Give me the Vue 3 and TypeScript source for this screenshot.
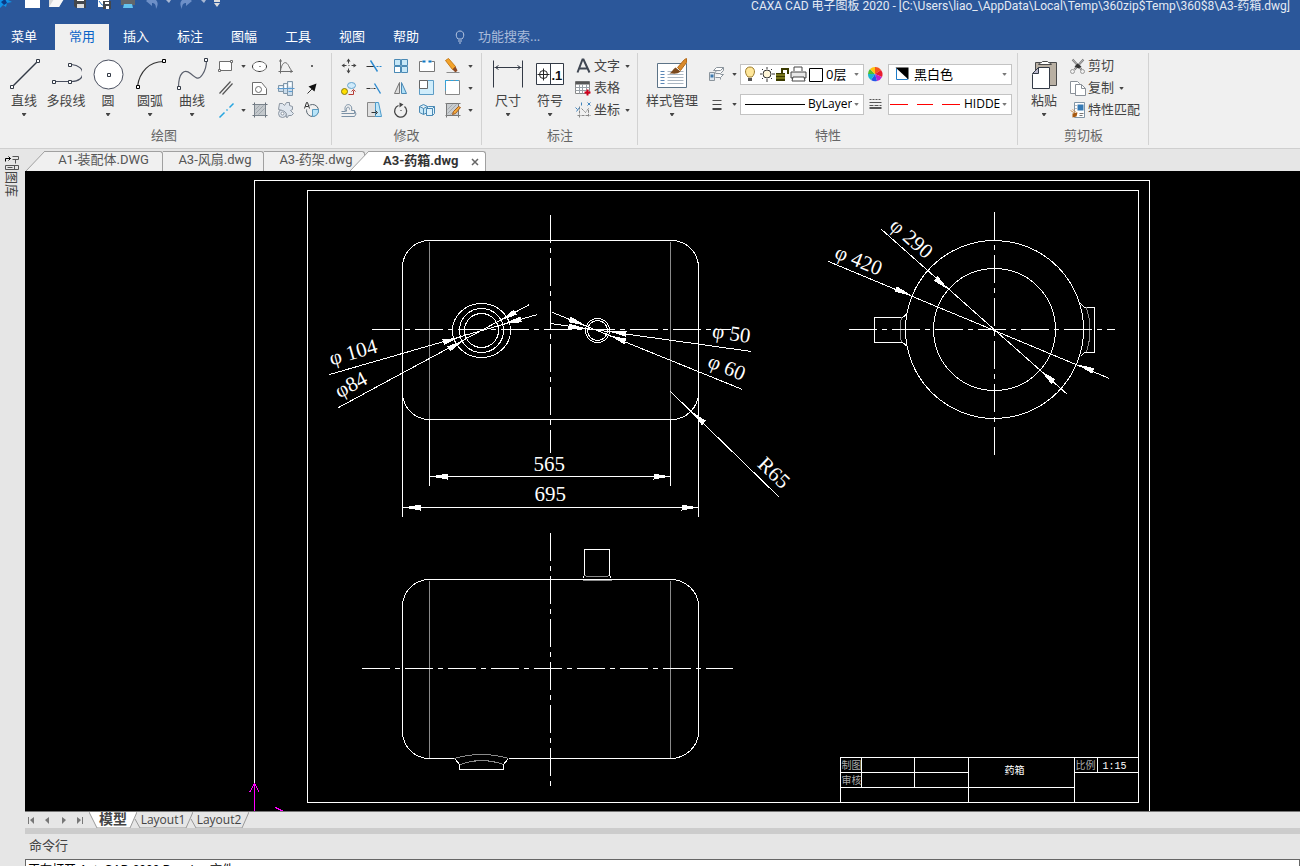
<script setup lang="ts">
import { ref } from 'vue'

interface Tool { name: string; icon: string; menu?: boolean }

const g = '#6d6d6d'
const big: Record<string, string> = {
  line: '<path d="M4 28 29 3" stroke="#333a46" stroke-width="1.4"/><path d="M2 27h3v3H2zM28 1h3v3h-3z" fill="#fff" stroke="#333a46"/>',
  poly: '<path d="M5 23h16M21 23c15 0 15-16 0-17" stroke="#4a5060" stroke-width="1.2"/><path d="M2 22h3v3H2zM18 22h3v3h-3zM18 5h3v3h-3z" fill="#fff" stroke="#333a46"/>',
  circle: '<circle cx="16" cy="16" r="14.5" fill="#fff" stroke="#4a5060"/><path d="M15 15h3v3h-3z" stroke="#333a46"/>',
  arc: '<path d="M3 28C5 13 15 3 29 3" stroke="#333" stroke-width="1.2"/><path d="M2 27h3v3H2zM28 1h3v3h-3z" fill="#fff" stroke="#000"/>',
  curve: '<path d="M2 29C2 14 8 10 14 15s8 7 12 1 4-10 4-14" stroke="#5a5f6c" stroke-width="1.2"/><path d="M1 28h3v3H1zM28 0h3v3h-3z" fill="#fff" stroke="#333a46"/>',
  dim: '<path d="M1 2v27M30 2v27" stroke="#333a46"/><path d="M2 9h27M6 7 3 9l3 2M25 7l3 2-3 2" stroke="#333a46"/>',
  symbol: '<path d="M2 5h27v21H2zM16 5v21" fill="#fff" stroke="#333a46"/><circle cx="9" cy="16" r="4" stroke="#222"/><path d="M3 16h12M9 10v12" stroke="#222"/><text x="17" y="21" font-size="13" font-weight="bold" fill="#111" stroke="none" font-family="Liberation Sans">.1</text>',
  style: '<path d="M1 5h29v24H1z" fill="#fff" stroke="#5c7387"/><path d="M4 13h4M4 16h4M4 19h4M4 22h4M4 25h4" stroke="#5b86b5"/><path d="M11 13h16M11 16h16M11 19h16M11 22h16M11 25h16" stroke="#aab6c2"/><path d="m21 9 7-8 2-1v4l-6 8z" fill="#d98a2b" stroke="#b56a18"/><path d="m19 9 5 4c-3 3-7 2-11 2 3-2 3-4 6-6z" fill="#7b4a1e"/>',
  paste: '<path d="M7 4h21v23H7z" fill="#b9b0a3" stroke="#4a4a4a"/><path d="M10 6c0-2 3-1 4-3h5c1 2 4 1 4 3z" fill="#fff" stroke="#4a4a4a"/><path d="m4 16 6-7h11v21H4z" fill="#fff" stroke="#333a46"/><path d="M4 15h6V9z" fill="#bcb8cc" stroke="#333a46"/>',
}
const small: Record<string, string> = {
  rect: `<path d="M2 4h12v9H2z" fill="#fff" stroke="${g}"/><path d="M13 3h2v2h-2zM1 12h2v2H1z" fill="#fff" stroke="${g}"/>`,
  ellipse: `<ellipse cx="8" cy="9" rx="7" ry="5" fill="#fff" stroke="${g}"/><path d="M7 4h2M1 8v2M15 8v2M7 14h2M8 9h1" stroke="#333"/>`,
  wave: `<path d="M3 2v14M1 14h14M3 13C5 3 9 4 11 8s3 5 4 6M2 4l1-2 1 2M13 13l2 1-2 1" stroke="${g}"/>`,
  point: '<path d="M8 8h1v1H8z" fill="#444" stroke="#444"/>',
  parallel: '<path d="M2 14 13 2M5 15 15 4" stroke="#555" stroke-width="1.2"/>',
  hole: `<path d="M1 3h9l5 6v6H1z" fill="#fff" stroke="${g}"/><circle cx="7" cy="10" r="3" stroke="${g}"/>`,
  shaft: '<path d="M1 6h5v6H1zM6 4h4v10H6zM10 2h5v14h-5z" fill="#c9dcec" stroke="#8096a8"/><path d="M2 7h3v2H2zM7 5h2v4H7zM11 3h3v4h-3z" fill="#fff"/><path d="M0 9h17M11 12h4" stroke="#5c9bd0"/>',
  arrow: '<path d="m4 14 6-6" stroke="#333"/><path d="m13 4-2 8-6-5z" fill="#111"/>',
  guide: '<path d="m2 16 5-5M9 9l1-1M12 6l4-4" stroke="#25a5e0" stroke-width="1.5"/>',
  hatch: '<path d="M3 3h11v11H3z" fill="#c3c8cc" stroke="#7b848c"/><path d="m4 8 4-4M4 12l8-8M7 13l6-6" stroke="#a0a7ad"/><path d="M1 3h2M14 3h2M1 14h2M14 14h2M3 1v2M14 1v2M3 14v2M14 14v2" stroke="#68717a"/>',
  gear: '<circle cx="5" cy="12" r="4" fill="#dfe6ee" stroke="#8b95a1"/><circle cx="5" cy="12" r="1.5" fill="#fff" stroke="#8b95a1"/><path d="M2 2h3l2 2 2-3h3v3l3 1v3l-2 1 3 3-2 2h-3l-1 2h-1c1-5-2-7-8-8z" fill="#dfe6ee" stroke="#8b95a1"/>',
  pie: '<circle cx="9" cy="9" r="6" stroke="#5a6670"/><path d="M9 8h6a6 6 0 0 1-6 7z" fill="#b9e4f8" stroke="#5a9bc0"/><path d="M0 0h6v8H0z" fill="#f0f0f0"/><path d="m1 7 2-6h1l2 6M2 5h3" stroke="#333"/>',
  move: '<path d="M8 2v4M8 11v4M2 8h4M11 8h4" stroke="#444"/><path d="m6 4 2-3 2 3zM6 13l2 3 2-3zM4 6 1 8l3 2zM13 6l3 2-3 2z" fill="#444"/><path d="M8 8h1" stroke="#444"/>',
  trim: '<path d="M0 9h8" stroke="#333"/><path d="M10 9h6" stroke="#2c8ad0" stroke-dasharray="2 1"/><path d="m4 3 7 11" stroke="#2c8ad0" stroke-width="1.4"/>',
  array: '<path d="M2 2h6v6H2zM9 2h6v6H9zM2 9h6v6H2zM9 9h6v6H9z" fill="#c7e8f8" stroke="#4b8ab5"/><path d="M2 9h6v6H2z" fill="#fff" stroke="#4b8ab5"/>',
  break: '<path d="M4 4H1v10h15V4h-3" fill="#fff" stroke="#777"/><path d="M4 4h3M10 4h3" stroke="#0b77c5" stroke-width="2"/>',
  erase: '<path d="m1 3 3-2 7 8-3 3z" fill="#f3a32a" stroke="#c77b18"/><path d="m8 12 3-3 2 4-2 2z" fill="#8d4a24"/><path d="M2 15h13" stroke="#8c8c8c"/>',
  copy: '<ellipse cx="11" cy="6" rx="4" ry="3" fill="#cfeafa" stroke="#65a4ce"/><circle cx="4" cy="12" r="3" fill="#ffdf00" stroke="#867a16"/><path d="M8 15h5v-4M11 12l2-2 2 2" stroke="#b63b35"/>',
  extend: '<path d="M0 9h4M5 9h1M7 9h2" stroke="#333"/><path d="m8 4 6 10" stroke="#2c8ad0" stroke-width="1.4"/>',
  mirror: '<path d="M7 3v11H2z" fill="#ddd" stroke="#777"/><path d="M9 3v11h5z" fill="#afdff7" stroke="#4b8ab5"/>',
  scale: '<path d="M1 1h14v14H1z" fill="#d0edfb" stroke="#5c9cc5"/><path d="M1 1h8v8H1z" fill="#fff" stroke="#666"/>',
  stretch: '<path d="M1 1h14v14H1z" fill="#fff" stroke="#888"/><path d="M1 1h14" stroke="#29a5e3" stroke-dasharray="3 2"/><path d="M1 1v10" stroke="#29a5e3" stroke-dasharray="3 1"/>',
  offset: '<path d="M1 10h4c-3-9 8-9 6-1h3v3H1M1 15h13q3-2 0-6" stroke="#7b91a5"/><path d="M6 10C5 5 9 4 9 8" stroke="#7b91a5"/>',
  slant: '<path d="M1 1h8v14H1z" fill="#e0e0e0" stroke="#888"/><path d="M9 1h3l3 14H9z" fill="#c2e7f8" stroke="#4b9acb"/><path d="M5 11h5M9 9l2 2-2 2" stroke="#333"/>',
  rotate: '<path d="M6 4a6 6 0 1 0 6 1" stroke="#444" stroke-width="1.3"/><path d="m7 1 4 2-4 3z" fill="#444"/><path d="M8 9h1" stroke="#333"/>',
  blocks: '<path d="m1 5 4-2 4 2v6l-4 2-4-2zM1 5l4 2 4-2M5 7v6" fill="#c7e8f8" stroke="#4b8ab5"/><path d="m8 7 2-2h6v7l-2 2H8zM8 7h6v7M14 7l2-2" fill="#dff2fc" stroke="#4b8ab5"/>',
  fill: '<path d="M2 2h12v12H2z" fill="#c8cccf" stroke="#777"/><path d="m3 8 5-5M3 12l9-9M6 13l7-7" stroke="#a4a9ad"/><path d="M1 2h1M14 2h2M1 14h1M14 14h2M2 14v2M14 14v2" stroke="#777"/><path d="m9 10 5-5 2 1-5 6-3 1z" fill="#f4aa3a" stroke="#a45d1f"/>',
  text: '<path d="M2 15 7 2h1l6 13M4 11h8" stroke="#3f4652" stroke-width="2"/>',
  table: '<path d="M0 2h14v12H0z" fill="#fff" stroke="#888"/><path d="M0 2h14v3H0z" fill="#555"/><path d="M0 8h14M0 11h14M4 5v9M7 5v9M11 5v9" stroke="#9aa1a8"/><path d="M12 10v6M9 13h6" stroke="#d1001c" stroke-width="2"/>',
  coord: '<path d="M4 5v11M2 14h13M6 7l4 4 3-4v8" stroke="#888" stroke-dasharray="3 1"/><path d="m0 6 2 2m2-2-3 4M6 1v3M12 1l3 3m0-3-3 3" stroke="#4385bd"/>',
  layers: '<path d="m5 5 3-3h7l-3 3zM6 8l2-3M7 12h5l3-3h-3M7 8h5l3-3M15 2v3M12 12v2" fill="#fff" stroke="#8b949c"/><path d="M1 7h5v8H1z" fill="#dce6ef" stroke="#8b949c"/><path d="M2 9h3v3H2z" fill="#3e79ac"/>',
  weight: '<path d="M4 5h9" stroke="#555"/><path d="M4 9h9M4 13h9M4 14h9" stroke="#444"/>',
  wheel: '<path d="M9 9V2a7 7 0 0 1 6 3z" fill="#f5551c"/><path d="m9 9 6-4a7 7 0 0 1 1 7z" fill="#e91b2d"/><path d="m9 9 7 3a7 7 0 0 1-5 4z" fill="#b924d0"/><path d="m9 9 2 7a7 7 0 0 1-6-1z" fill="#2556e8"/><path d="m9 9-4 6a7 7 0 0 1-3-6z" fill="#18b6d0"/><path d="M9 9H2a7 7 0 0 1 2-5z" fill="#51bd31"/><path d="M9 9 4 4a7 7 0 0 1 5-2z" fill="#ffc410"/>',
  types: '<path d="M3 4h12" stroke="#555" stroke-dasharray="2 1"/><path d="M3 7h12M3 12h12M3 13h12" stroke="#555"/><path d="M3 10h12" stroke="#555" stroke-dasharray="4 1"/>',
  cut: '<path d="m3 2 9 10M14 2 5 12" stroke="#777" stroke-width="2"/><path d="m3 2 9 10M14 2 5 12" stroke="#e8e8e8" stroke-width=".6"/><path d="m5 9 3-3 4 3-3 2z" fill="#333"/><circle cx="3" cy="14" r="2" stroke="#999"/><circle cx="13" cy="14" r="2" stroke="#999"/>',
  pages: '<path d="M1 2h7l2 2v10H1z" fill="#fff" stroke="#8a9199"/><path d="M6 5h6l4 4v7H6z" fill="#fff" stroke="#8a9199"/><path d="M12 5v4h4" stroke="#8a9199"/>',
  match: '<path d="M5 1h10v15H5z" fill="#fff" stroke="#8095a7"/><path d="M8 3h6v6H8z" fill="#3479b5"/><path d="M6 4h1M6 7h1M10 12h4M10 14h3" stroke="#777"/><path d="m1 9 5 3M3 8l4 3" stroke="#d79a5a"/><path d="m3 12 5-1-1 4-4 1z" fill="#a8590f"/>',
}

const drawBig: Tool[] = [
  { name: '直线', icon: 'line', menu: true },
  { name: '多段线', icon: 'poly' },
  { name: '圆', icon: 'circle', menu: true },
  { name: '圆弧', icon: 'arc', menu: true },
  { name: '曲线', icon: 'curve', menu: true },
]
const drawSmall: Tool[] = [
  { name: '矩形', icon: 'rect', menu: true }, { name: '椭圆', icon: 'ellipse' }, { name: '公式曲线', icon: 'wave' }, { name: '点', icon: 'point' },
  { name: '平行线', icon: 'parallel' }, { name: '局部放大', icon: 'hole' }, { name: '孔轴', icon: 'shaft' }, { name: '箭头', icon: 'arrow' },
  { name: '中心线', icon: 'guide', menu: true }, { name: '剖面线', icon: 'hatch' }, { name: '齿形', icon: 'gear' }, { name: '填充', icon: 'pie' },
]
const editSmall: Tool[] = [
  { name: '平移', icon: 'move' }, { name: '裁剪', icon: 'trim' }, { name: '阵列', icon: 'array' }, { name: '打断', icon: 'break' }, { name: '删除', icon: 'erase', menu: true },
  { name: '平移复制', icon: 'copy' }, { name: '延伸', icon: 'extend' }, { name: '镜像', icon: 'mirror' }, { name: '缩放', icon: 'scale' }, { name: '拉伸', icon: 'stretch', menu: true },
  { name: '等距线', icon: 'offset' }, { name: '斜切', icon: 'slant' }, { name: '旋转', icon: 'rotate' }, { name: '分解', icon: 'blocks' }, { name: '编辑填充', icon: 'fill', menu: true },
]
const noteBig: Tool[] = [
  { name: '尺寸', icon: 'dim', menu: true },
  { name: '符号', icon: 'symbol', menu: true },
]
const noteRows: Tool[] = [
  { name: '文字', icon: 'text', menu: true },
  { name: '表格', icon: 'table' },
  { name: '坐标', icon: 'coord', menu: true },
]
const clipRows: Tool[] = [
  { name: '剪切', icon: 'cut' },
  { name: '复制', icon: 'pages', menu: true },
  { name: '特性匹配', icon: 'match' },
]
const menus = ['常用', '插入', '标注', '图幅', '工具', '视图', '帮助']
const activeMenu = ref('常用')

type Seg = [number, number, number, number]
/* Filled arrow head: tip point followed by the point it comes from. */
function head([x, y, fx, fy]: Seg): string {
  const len = Math.hypot(fx - x, fy - y)
  const ux = (fx - x) / len
  const uy = (fy - y) / len
  const bx = x + ux * 17
  const by = y + uy * 17
  return `${x},${y} ${bx - uy * 3},${by + ux * 3} ${bx + uy * 3},${by - ux * 3}`
}
const heads: Seg[] = [
  [459, 337, 442, 342], [504, 323, 520, 319], [463, 340, 449, 348], [500, 320, 514, 312],
  [585, 328, 568, 326], [609, 331, 624, 333], [585, 325, 567, 318], [609, 335, 625, 341],
  [911, 295, 894, 288], [1077, 364, 1094, 371], [948, 289, 933, 276], [1040, 370, 1055, 383],
  [691, 411, 703, 422], [430, 476, 450, 476], [670, 476, 650, 476], [403, 507, 420, 507], [698, 507, 680, 507],
]
const leaders: Seg[] = [
  [329, 374, 537, 314], [338, 407, 529, 304], [550, 323, 751, 351], [552, 312, 742, 389],
  [828, 261, 1109, 378], [881, 229, 1067, 394], [670, 391, 779, 497],
  [429, 476, 670, 476], [402, 507, 698, 507],
]
interface Note { x: number; y: number; a: number; t: string }
const notes: Note[] = [
  { x: 331, y: 365, a: -16, t: 'φ 104' }, { x: 339, y: 398, a: -28, t: 'φ84' },
  { x: 711, y: 337, a: 8, t: 'φ 50' }, { x: 706, y: 366, a: 22, t: 'φ 60' },
  { x: 833, y: 257, a: 22, t: 'φ 420' }, { x: 888, y: 227, a: 41, t: 'φ 290' },
  { x: 756, y: 465, a: 44, t: 'R65' }, { x: 533, y: 470, a: 0, t: '565' }, { x: 534, y: 500, a: 0, t: '695' },
]
const log = '正在打开 AutoCAD 2000 Drawing 文件'
</script>

<template>
  <div class="window">
    <header class="title">
      <div class="quick">
        <svg width="222" height="16" viewBox="0 0 222 16" fill="none" aria-hidden="true">
          <path d="m0 7 4-6 3 3 3-2-2 5 4 2-5 1-1 4-3-2-3 3z" fill="#1193e8" /><path d="m1 9 4-3 2 4-3 2z" fill="#0b3a86" />
          <path d="M25 0h15v15H25z" fill="#fff" />
          <path d="M49 2h10v4h4l-4 8H49z" fill="#d8d8d8" /><path d="m49 14 5-8h10l-5 8z" fill="#f7f7f7" />
          <path d="M74 1h12v14H76l-2-2z" fill="#43474d" /><path d="M77 1h7v7h-7z" fill="#fff" /><path d="M77 11h7v4h-7z" fill="#ddd" />
          <path d="M98 0h11v14H98z" fill="#fff" /><path d="m99 8 3 4h4" stroke="#2d7ccb" /><path d="M103 8h8v8h-8z" fill="#43474d" /><path d="M105 9h4v2h-4zM106 13h3v3h-3z" fill="#fff" />
          <path d="M121 7h14v5h-14z" fill="#62666b" /><path d="M124 0h8v7h-8z" fill="#fff" /><path d="M124 11h8l1 4h-10z" fill="#63c3ef" />
          <path d="m146 8 6-5v3c6 0 7 5 4 10 0-4-1-6-4-6v3zM192 8l-6-5v3c-6 0-7 5-4 10 0-4 1-6 4-6v3z" fill="#6d8fc7" />
          <path d="M166 7h5l-2 3zM201 7h5l-2 3z" fill="#a8b8d4" /><path d="M214 7h6v2h-6zM214 10h6l-3 4z" fill="#ddd" />
        </svg>
      </div>
      <span class="caption">CAXA CAD 电子图板 2020 - [C:\Users\liao_\AppData\Local\Temp\360zip$Temp\360$8\A3-药箱.dwg]</span>
    </header>

    <nav class="menu">
      <button class="file">菜单</button>
      <button v-for="m in menus" :key="m" :class="{ on: m === activeMenu }" @click="activeMenu = m">{{ m }}</button>
      <label class="search">
        <svg width="10" height="14" viewBox="0 0 10 14" fill="none" stroke="#b9c8e2" aria-hidden="true"><path d="M3 9C0 6 1 1 5 1s5 5 2 8zM3 11h4M4 13h2" /></svg>
        <input type="text" placeholder="功能搜索..." aria-label="功能搜索" />
      </label>
    </nav>

    <section class="ribbon">
      <div class="group draw">
        <div class="tools">
          <button v-for="t in drawBig" :key="t.name" class="big">
            <svg width="32" height="32" viewBox="-.5 -.5 32 32" fill="none" v-html="big[t.icon]"></svg>
            <span>{{ t.name }}</span><i v-if="t.menu" class="caret"></i>
          </button>
          <div class="grid four">
            <button v-for="t in drawSmall" :key="t.name" class="small" :title="t.name" :aria-label="t.name">
              <svg width="18" height="18" viewBox="-.5 -.5 18 18" fill="none" v-html="small[t.icon]"></svg><i v-if="t.menu" class="caret"></i>
            </button>
          </div>
        </div>
        <h2>绘图</h2>
      </div>

      <div class="group edit">
        <div class="tools">
          <div class="grid five">
            <button v-for="t in editSmall" :key="t.name" class="small" :title="t.name" :aria-label="t.name">
              <svg width="18" height="18" viewBox="-.5 -.5 18 18" fill="none" v-html="small[t.icon]"></svg><i v-if="t.menu" class="caret"></i>
            </button>
          </div>
        </div>
        <h2>修改</h2>
      </div>

      <div class="group note">
        <div class="tools">
          <button v-for="t in noteBig" :key="t.name" class="big">
            <svg width="32" height="32" viewBox="-.5 -.5 32 32" fill="none" v-html="big[t.icon]"></svg>
            <span>{{ t.name }}</span><i class="caret"></i>
          </button>
          <div class="rows">
            <button v-for="t in noteRows" :key="t.name" class="small">
              <svg width="18" height="18" viewBox="-.5 -.5 18 18" fill="none" v-html="small[t.icon]"></svg>
              <span>{{ t.name }}</span><i v-if="t.menu" class="caret"></i>
            </button>
          </div>
        </div>
        <h2>标注</h2>
      </div>

      <div class="group props">
        <div class="tools">
          <button class="big wide">
            <svg width="32" height="32" viewBox="-.5 -.5 32 32" fill="none" v-html="big.style"></svg>
            <span>样式管理</span><i class="caret"></i>
          </button>
          <div class="combos">
            <button class="small" aria-label="图层"><svg width="18" height="18" viewBox="-.5 -.5 18 18" fill="none" v-html="small.layers"></svg><i class="caret"></i></button>
            <div class="combo">
              <svg width="82" height="18" viewBox="0 0 82 18" fill="none" aria-hidden="true">
                <path d="M7 12C3 8 4 2 9 2s6 6 2 10z" fill="#ffe79a" stroke="#9b7b2c" /><path d="M7 13h4v3H7z" fill="#555" />
                <circle cx="26" cy="9" r="4" fill="#fff6d8" stroke="#333" /><path d="M26 2v2M26 14v3M19 9h2M31 9h3M21 4l1 1M30 13l1 1M31 4l-1 1M22 13l-1 1" stroke="#333" />
                <path d="M35 8h9v8h-9z" fill="#3a3a00" /><path d="M35 10h9M35 13h9" stroke="#b6b23a" /><path d="M41 8V4h6v5" stroke="#3a3a00" stroke-width="2" />
                <path d="M53 6V2h8v4" fill="#fff" stroke="#444" /><path d="M50 7h15v6H50z" fill="#e8e8e8" stroke="#444" /><path d="M52 12h11l1 4H51z" fill="#fff" stroke="#444" />
                <path d="M68 3h13v13H68z" fill="#fff" stroke="#000" transform="translate(.5 .5)" />
              </svg>
              <select aria-label="当前图层"><option>0层</option></select><i class="caret"></i>
            </div>
            <button class="small" aria-label="颜色"><svg width="18" height="18" viewBox="0 0 18 18" fill="none" v-html="small.wheel"></svg></button>
            <div class="combo">
              <svg width="22" height="14" viewBox="-.5 -.5 22 14" aria-hidden="true"><path d="M7 1h11v11H7z" fill="#fff" stroke="#1d7cc8" /><path d="M6 0h13v12z" fill="#000" /></svg>
              <select aria-label="当前颜色"><option>黑白色</option></select><i class="caret"></i>
            </div>
            <button class="small" aria-label="线宽"><svg width="18" height="18" viewBox="-.5 -.5 18 18" fill="none" v-html="small.weight"></svg><i class="caret"></i></button>
            <div class="combo latin">
              <svg width="64" height="3" viewBox="0 0 64 3" aria-hidden="true"><path d="M4 1h60v1H4z" fill="#000" /></svg>
              <select aria-label="当前线宽"><option>ByLayer</option></select><i class="caret"></i>
            </div>
            <button class="small" aria-label="线型"><svg width="18" height="18" viewBox="-.5 -.5 18 18" fill="none" v-html="small.types"></svg></button>
            <div class="combo latin">
              <svg width="72" height="3" viewBox="0 0 72 3" aria-hidden="true"><path d="M1 1h18v1H1zM28 1h16v1H28zM53 1h18v1H53z" fill="#f00" /></svg>
              <select aria-label="当前线型"><option>HIDDE</option></select><i class="caret"></i>
            </div>
          </div>
        </div>
        <h2>特性</h2>
      </div>

      <div class="group clip">
        <div class="tools">
          <button class="big">
            <svg width="32" height="32" viewBox="-.5 -.5 32 32" fill="none" v-html="big.paste"></svg>
            <span>粘贴</span><i class="caret"></i>
          </button>
          <div class="rows">
            <button v-for="t in clipRows" :key="t.name" class="small">
              <svg width="18" height="18" viewBox="-.5 -.5 18 18" fill="none" v-html="small[t.icon]"></svg>
              <span>{{ t.name }}</span><i v-if="t.menu" class="caret"></i>
            </button>
          </div>
        </div>
        <h2>剪切板</h2>
      </div>
    </section>

    <div class="body">
      <aside>
        <button class="library">
          <svg width="16" height="16" viewBox="-.5 -.5 16 16" fill="none" aria-hidden="true"><path d="M1 6V3h5M4 1l2 2-2 2" stroke="#000" /><path d="M8 1h6v3H8M11 4v4" stroke="#555" /><path d="M1 10h13v4H1zM10 10v4M3 12h5" stroke="#555" /></svg>
          <span>图库</span>
        </button>
      </aside>

      <main>
        <div class="files">
          <button class="file-tab first"><svg width="20" height="20" viewBox="0 0 20 20"><path d="M1 20 20 0v20z" fill="#f0f0f0" /><path d="M1 20 20 0" stroke="#a0a0a0" /></svg><span>A1-装配体.DWG</span></button>
          <button class="file-tab"><span>A3-风扇.dwg</span></button>
          <button class="file-tab"><span>A3-药架.dwg</span></button>
          <div class="file-tab active">
            <svg width="20" height="20" viewBox="0 0 20 20"><path d="M1 20 20 0v20z" fill="#fff" /><path d="M1 20 20 0" stroke="#a0a0a0" /></svg>
            <span><button class="pick">A3-药箱.dwg</button><button class="close" aria-label="关闭"><svg width="8" height="8" viewBox="0 0 8 8"><path d="m1 1 6 6M7 1 1 7" stroke="#666" stroke-width="1.5" /></svg></button></span>
          </div>
        </div>

        <div class="canvas">
          <svg width="100%" height="100%" fill="none" stroke="#fff" shape-rendering="crispEdges" role="img" aria-label="药箱">
            <g transform="translate(-24.5 -170.5)">
              <path d="M254 820V180h895v640M307 190h831v612H307z" />
              <path d="M840 802v-45h298M840 772h128M1074 772h64M840 787h234M861 757v30M914 757v30M968 757v45M1074 757v45M1097 757v15" />

              <rect x="402" y="240" width="296" height="179" rx="27" />
              <path d="M402 393v123M698 393v123M429 419v66M670 419v66" />
              <path d="M429 241v177M670 241v177M429 580v178M670 580v178" class="thin" />
              <ellipse cx="481" cy="330" rx="29" ry="27" /><circle cx="481" cy="330" r="22" /><circle cx="481" cy="330" r="17" />
              <circle cx="597" cy="330" r="12" /><circle cx="597" cy="330" r="10" />

              <path d="M429 579h241a28 27 0 0 1 28 27v125a28 27 0 0 1-28 27H508M454 758h-25a27 27 0 0 1-27-27V606a27 27 0 0 1 27-27" />
              <path d="M584 575v-26h25v26M584 575l-2 3M609 575l2 3" />
              <path d="M584 575l3 1h19l3-1M582 580h29" class="thin" />
              <path d="m455 759 4 5v5h44v-5l4-5" />
              <path d="M454 758q27-8 54 0M460 764q21-8 43 0" class="thin" />

              <circle cx="994" cy="329" r="89" /><circle cx="994" cy="329" r="61" />
              <path d="M902 317h-28v25h28l5 4M902 317l5-4M1080 303l4 4h10v45h-10l-4 4" />
              <path d="M901 317q-3 12 0 25M1086 307q7 22 0 45" class="thin" />

              <path d="M371 329h359M361 668h371M848 329h266" class="axis" />
              <path d="M550 214v238M550 532v257M994 211v245" class="axis" />

              <line v-for="(s, i) in leaders" :key="'l' + i" :x1="s[0]" :y1="s[1]" :x2="s[2]" :y2="s[3]" />
              <polygon v-for="(s, i) in heads" :key="'h' + i" :points="head(s)" fill="#fff" stroke="none" />
              <text v-for="n in notes" :key="n.t" class="dim" :transform="`translate(${n.x} ${n.y}) rotate(${n.a})`">{{ n.t }}</text>

              <text x="841" y="768" class="cell">制图</text>
              <text x="841" y="783" class="cell">审核</text>
              <text x="1075" y="768" class="cell">比例</text>
              <text x="1004" y="773" class="cell bright">药箱</text>
              <text x="1102" y="768" class="cell bright">1:15</text>
              <path d="M254 812v-28M254 783l-5 9M254 783l5 9M275 807l8 4" stroke="#f0f" />
            </g>
          </svg>
        </div>

        <div class="sheets">
          <svg class="pager" width="64" height="16" viewBox="0 0 64 16" fill="#777" role="img" aria-label="翻页"><path d="M3 5h1v7H3zM9 5v7L5 8zM24 5v7l-4-4zM37 5v7l4-4zM52 5v7l4-4zM57 5h1v7h-1z" /></svg>
          <button class="sheet on"><svg width="48" height="17" viewBox="0 0 48 17"><path d="M0 0h48l-7 16H8z" fill="#fff" /><path d="m0 0 8 16h33l7-16" fill="none" stroke="#999" /></svg><span>模型</span></button>
          <button class="sheet"><svg width="60" height="17" viewBox="0 0 60 17" fill="none" stroke="#999"><path d="m2 7 5 9h46l7-16" /></svg><span>Layout1</span></button>
          <button class="sheet"><svg width="60" height="17" viewBox="0 0 60 17" fill="none" stroke="#999"><path d="m2 7 5 9h46l7-16" /></svg><span>Layout2</span></button>
        </div>

        <div class="command">
          <label for="cmd">命令行</label>
          <textarea id="cmd" readonly :value="log"></textarea>
        </div>
      </main>
    </div>
  </div>
</template>

<style>
body { margin: 0; overflow: hidden; }
</style>

<style scoped>
.window {
  display: flex; flex-direction: column; height: 100vh; overflow: hidden;
  background: #e6e6e6; color: #444;
  font: 13px/20px "Open Sans", "Noto Sans CJK SC", sans-serif;
}
button { border: 0; padding: 0; background: none; color: inherit; font: inherit; cursor: pointer; }
svg { display: block; flex: none; }
.title { position: relative; z-index: 1; display: flex; justify-content: space-between; height: 10px; padding-right: 10px; background: #2b579a; color: #e4eaf4; }
.quick { margin-top: -7px; }
.caption { font: 12px/12px Roboto, "Noto Sans CJK SC", sans-serif; white-space: nowrap; }
.menu { display: flex; align-items: flex-end; height: 40px; background: #2b579a; color: #fff; }
.menu button { width: 54px; height: 26px; padding-bottom: 2px; line-height: 22px; }
.menu .file { width: 48px; margin-right: 7px; }
.menu .on { background: #f0f0f0; color: #0a64c8; }
.search { display: flex; align-items: center; gap: 13px; height: 26px; margin-left: 22px; }
.search input { width: 120px; border: 0; padding: 0 0 2px; background: none; color: #fff; font: inherit; outline: 0; }
.search input::placeholder { color: #a9bbda; opacity: 1; }

.ribbon { display: flex; padding: 3px 0; border-bottom: 1px solid #cfcfcf; background: #f0f0f0; }
.group { display: flex; flex-direction: column; box-sizing: border-box; height: 92px; padding-top: 2px; border-right: 1px solid #d2d2d2; }
.tools { display: flex; height: 72px; }
.group h2 { margin: 0; font-size: 13px; font-weight: 400; line-height: 16px; text-align: center; color: #666; }
.draw { width: 332px; padding-left: 3px; }
.draw h2 { padding-right: 6px; }
.edit { width: 150px; padding-left: 4px; }
.edit h2, .note h2, .props h2, .clip h2 { padding-right: 4px; }
.note { width: 156px; padding-left: 5px; }
.props { width: 380px; padding-left: 5px; }
.clip { width: 131px; padding-left: 5px; }
.big { display: flex; flex-direction: column; align-items: center; width: 42px; padding-top: 3px; white-space: nowrap; }
.big.wide { width: 58px; }
.big .caret { margin-top: 3px; }
.caret { flex: none; width: 5px; height: 3px; background: #444; clip-path: polygon(0 0, 100% 0, 60% 100%, 40% 100%); }
.grid { display: grid; grid-auto-rows: 22px; }
.four { grid-template-columns: 34px 26px 26px 26px; }
.five { grid-template-columns: 26px 26px 26px 26px 36px; }
.small { display: flex; align-items: center; gap: 6px; padding-left: 4px; white-space: nowrap; }
.rows { display: grid; grid-auto-rows: 22px; }
.rows .small { gap: 1px; line-height: 18px; }
.rows span { padding-bottom: 2px; }
.rows .caret { margin-left: 4px; }
.combos { display: grid; grid-template-columns: 34px 124px 24px 124px; grid-auto-rows: 30px; align-items: center; height: 60px; padding: 4px 0 0 5px; }
.combos .small { padding-left: 2px; }
.combo { display: flex; align-items: center; box-sizing: border-box; height: 21px; border: 1px solid #c3c3c3; background: #fff; }
.combo select { flex: 1; min-width: 0; margin-left: 3px; border: 0; padding: 0; appearance: none; background: none; color: #000; font: inherit; line-height: 18px; }
.latin select { font-size: 12px; }
.combo .caret { margin: 0 4px 0 2px; background: #777; }

.body { display: grid; flex: 1; grid-template-columns: 25px 1fr; min-height: 0; }
.library { display: flex; flex-direction: column; align-items: center; width: 24px; margin-top: 6px; }
.library span { writing-mode: vertical-rl; text-orientation: sideways; line-height: 16px; }
main { display: flex; flex-direction: column; min-width: 0; min-height: 0; }
.files { display: flex; align-items: flex-end; height: 22px; }
.file-tab { display: flex; height: 20px; color: #555; font-family: Roboto, "Noto Sans CJK SC", sans-serif; line-height: 16px; }
.file-tab > span { box-sizing: border-box; width: 101px; height: 20px; padding-left: 4px; border: 1px solid #a0a0a0; border-width: 1px 1px 0 0; border-radius: 0 3px 0 0; background: #f0f0f0; }
.file-tab.first > span { width: 118px; padding: 0; }
.file-tab.active { margin-left: -16px; color: #333; font-weight: 700; }
.file-tab.active > span { display: flex; justify-content: space-between; align-items: center; width: 117px; padding: 0 6px 0 14px; background: #fff; }
.pick { padding-bottom: 2px; line-height: 16px; }
.canvas { flex: 1; min-height: 0; overflow: hidden; background: #000; }
.thin { stroke: #8a8a8a; }
.axis { stroke-dasharray: 28 5 5 5; }
.dim { fill: #fff; stroke: none; font: 21px "Liberation Serif", serif; white-space: pre; }
.cell { fill: #aaa; stroke: none; font: 10px "Liberation Mono", "Noto Sans CJK SC", monospace; }
.bright { fill: #fff; }
.sheets { display: flex; height: 16px; border-top: 1px solid #777; }
.sheet { display: grid; height: 17px; margin-right: -4px; font-size: 12px; line-height: 15px; }
.sheet > * { grid-area: 1 / 1; }
.sheet.on { font-size: 14px; font-weight: 700; line-height: 14px; }
.command { position: relative; display: grid; grid-template-rows: 25px 7px; border-top: 6px solid #ccc; }
.command label { padding-left: 4px; line-height: 22px; }
.command textarea { height: 24px; box-sizing: border-box; border: 1px solid #666; padding: 1px 2px 0; background: #fff; color: #000; font: 12px/18px "Liberation Sans", "Noto Sans CJK SC", sans-serif; resize: none; outline: 0; }
</style>
